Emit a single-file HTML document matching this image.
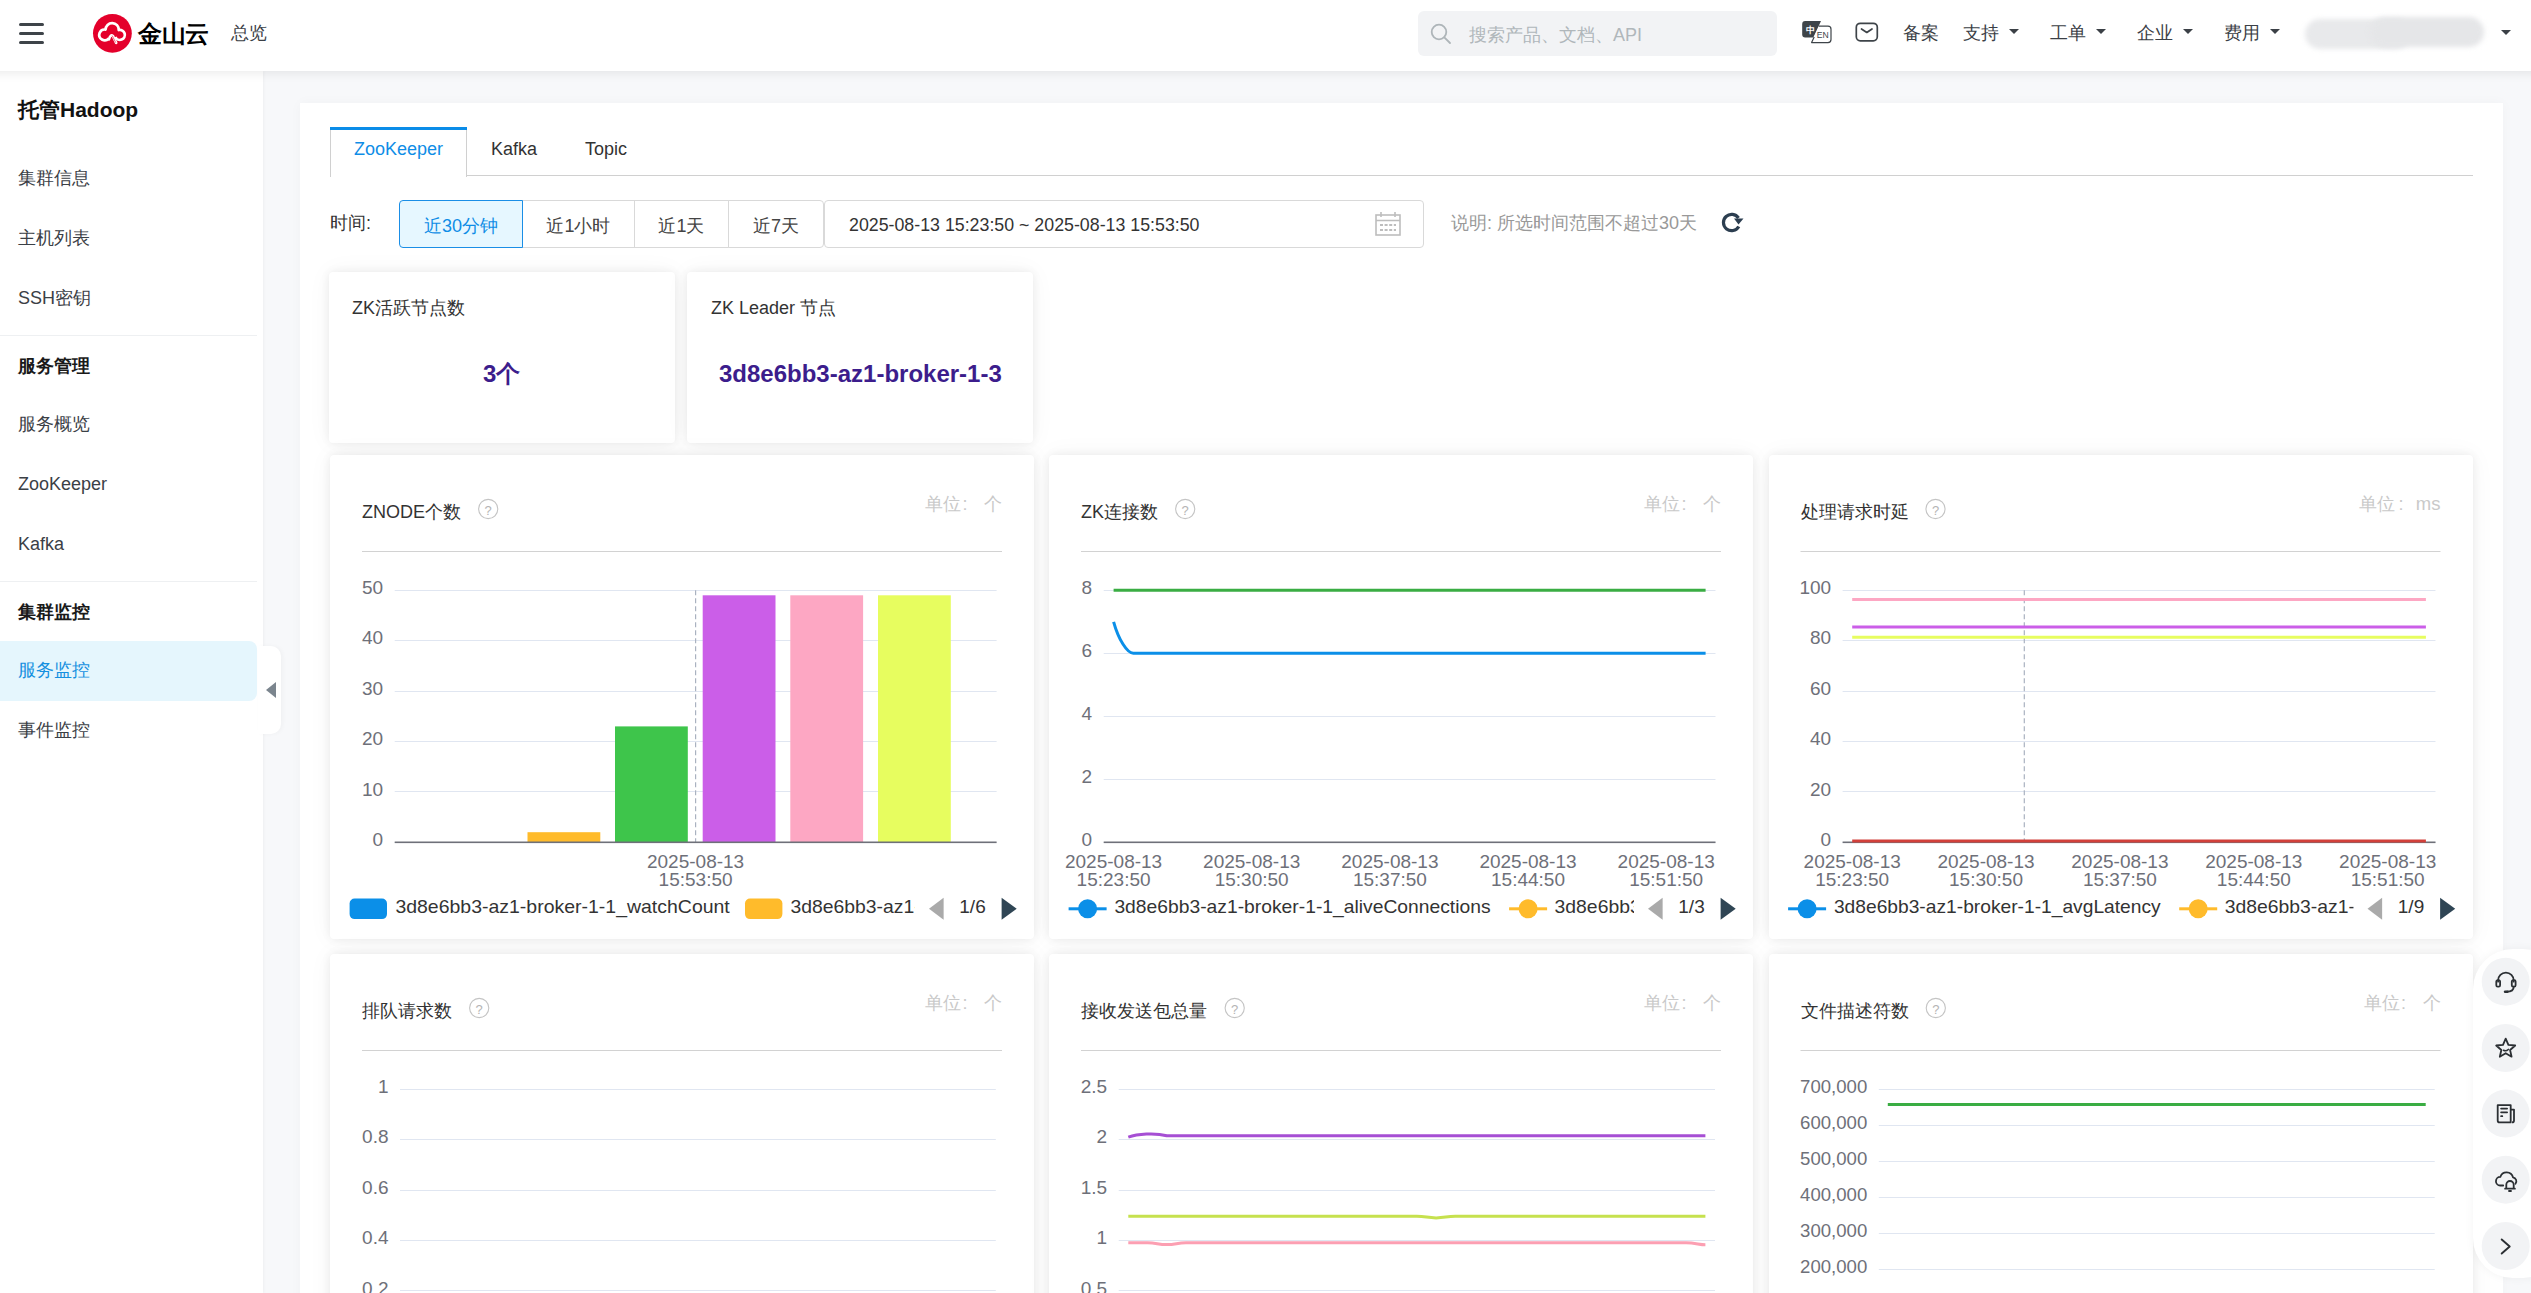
<!DOCTYPE html>
<html><head><meta charset="utf-8"><style>
*{box-sizing:border-box;margin:0;padding:0}
html,body{width:2531px;height:1293px;overflow:hidden;background:#f7f8fa;font-family:"Liberation Sans",sans-serif;color:#333}
.a{position:absolute;white-space:nowrap}
#hdr{position:absolute;left:0;top:0;width:2531px;height:71px;background:#fff;z-index:5}
#hsh{position:absolute;left:-40px;top:0;width:2611px;height:71px;background:#fff;box-shadow:0 2px 10px rgba(0,0,0,0.085);z-index:4}
#side{position:absolute;left:0;top:71px;width:263px;height:1222px;background:#fff;z-index:2;box-shadow:1px 0 3px rgba(0,0,0,0.04)}
#panel{position:absolute;left:300px;top:103px;width:2203px;height:1300px;background:#fff;z-index:1;box-shadow:0 0 12px rgba(0,0,0,0.03)}
.nav{font-size:18px;color:#3b4046;line-height:24px}
.navb{font-size:18px;font-weight:700;color:#1a1a1a;line-height:24px}
.hd{font-size:18px;color:#3b4046;line-height:24px}
.tri{position:absolute;width:0;height:0;border-left:5px solid transparent;border-right:5px solid transparent;border-top:5px solid #3b4046}
.card{position:absolute;background:#fff;border-radius:4px;box-shadow:0 0 10px rgba(0,0,0,0.07),0 0 26px rgba(0,0,0,0.045);z-index:3}
.t18{font-size:18px;line-height:24px;color:#333}
.btn{position:absolute;top:200px;height:48px;border:1px solid #d9d9d9;background:#fff;font-size:18px;line-height:46px;padding-top:2px;color:#444;text-align:center;z-index:3}
#ov{position:absolute;left:0;top:0;z-index:6}
</style></head><body>
<div id="hsh"></div>
<div id="hdr">
<div class="a" style="left:19px;top:23px;width:25px;height:3px;border-radius:2px;background:#3e4449"></div>
<div class="a" style="left:19px;top:32px;width:25px;height:3px;border-radius:2px;background:#3e4449"></div>
<div class="a" style="left:19px;top:41px;width:25px;height:3px;border-radius:2px;background:#3e4449"></div>
<svg class="a" style="left:90px;top:10px" width="46" height="46" viewBox="0 0 46 46">
<circle cx="22.4" cy="23.3" r="19.4" fill="#e4002b"/>
<path d="M18.7 28.34 A5.35 5.35 0 1 1 15.55 19.63 A6.6 6.6 0 1 1 28.74 20.03 A5 5 0 1 1 25.3 27.0" fill="none" stroke="#fff" stroke-width="2.7" stroke-linejoin="round"/>
<path d="M18.9 29.4 Q20.5 23.6 23.1 26.3 L26.2 32.8" fill="none" stroke="#fff" stroke-width="2.7" stroke-linecap="round" stroke-linejoin="round"/>
<path d="M22.2 25.6 L25.7 32.6" stroke="#e4002b" stroke-width="0.6"/>
</svg>
<div class="a" style="left:138px;top:18px;font-size:24px;font-weight:700;color:#000;line-height:32px;letter-spacing:-0.5px">金山云</div>
<div class="a hd" style="left:231px;top:21px">总览</div>
<div class="a" style="left:1418px;top:11px;width:359px;height:45px;border-radius:6px;background:#f2f3f5"></div>
<svg class="a" style="left:1430px;top:23px" width="22" height="22" viewBox="0 0 22 22"><circle cx="9" cy="9" r="7.3" stroke="#aeb5b9" stroke-width="1.8" fill="none"/><path d="M14.3 14.3 L20 20" stroke="#aeb5b9" stroke-width="1.8" stroke-linecap="round"/></svg>
<div class="a" style="left:1469px;top:23px;font-size:18px;color:#b0b7bb;line-height:24px">搜索产品、文档、API</div>
<svg class="a" style="left:1801px;top:20px" width="32" height="24" viewBox="0 0 32 24">
<path d="M4.2 1.1 H20 L12.3 17.4 H4.2 Q1.2 17.4 1.2 14.4 V4.1 Q1.2 1.1 4.2 1.1Z" fill="#3e4449"/>
<path d="M17.9 6.2 H27 Q30 6.2 30 9.2 V19.6 Q30 22.6 27 22.6 H10.6 Z" fill="#fff"/><path d="M17.6 6.2 H27 Q30 6.2 30 9.2 V19.6 Q30 22.6 27 22.6 H10.6 L13.2 17" fill="none" stroke="#3e4449" stroke-width="1.2" stroke-linejoin="round"/>
<text x="4.6" y="13.2" font-size="9" font-weight="700" fill="#fff" font-family='"Liberation Sans",sans-serif'>中</text>
<text x="15.8" y="17.8" font-size="9.4" fill="#3e4449" font-family='"Liberation Sans",sans-serif' textLength="12" lengthAdjust="spacingAndGlyphs">EN</text>
</svg>
<svg class="a" style="left:1855px;top:22px" width="24" height="20" viewBox="0 0 24 20"><rect x="1.3" y="1.3" width="21" height="17.5" rx="4" stroke="#3e4449" stroke-width="1.7" fill="none"/><path d="M6.5 7 L11.8 10.5 L17 7" stroke="#3e4449" stroke-width="1.7" fill="none" stroke-linecap="round" stroke-linejoin="round"/></svg>
<div class="a hd" style="left:1903px;top:21px">备案</div>
<div class="a hd" style="left:1963px;top:21px">支持</div><div class="tri" style="left:2009px;top:29px"></div>
<div class="a hd" style="left:2050px;top:21px">工单</div><div class="tri" style="left:2096px;top:29px"></div>
<div class="a hd" style="left:2137px;top:21px">企业</div><div class="tri" style="left:2183px;top:29px"></div>
<div class="a hd" style="left:2224px;top:21px">费用</div><div class="tri" style="left:2270px;top:29px"></div>
<div class="a" style="left:2305px;top:19px;width:106px;height:30px;border-radius:15px;background:#e8e9eb;filter:blur(2.5px)"></div>
<div class="a" style="left:2370px;top:17px;width:114px;height:30px;border-radius:15px;background:#e5e6e8;filter:blur(2.5px)"></div>
<div class="tri" style="left:2501px;top:30px"></div>
</div>
<div id="side">
<div class="a" style="left:18px;top:26px;font-size:21px;font-weight:700;color:#111;line-height:26px">托管Hadoop</div>
<div class="a nav" style="left:18px;top:95px">集群信息</div>
<div class="a nav" style="left:18px;top:155px">主机列表</div>
<div class="a nav" style="left:18px;top:215px">SSH密钥</div>
<div class="a nav" style="left:18px;top:341px">服务概览</div>
<div class="a nav" style="left:18px;top:401px">ZooKeeper</div>
<div class="a nav" style="left:18px;top:461px">Kafka</div>
<div class="a nav" style="left:18px;top:647px">事件监控</div>
<div class="a navb" style="left:18px;top:283px">服务管理</div>
<div class="a navb" style="left:18px;top:529px">集群监控</div>
<div class="a" style="left:0;top:264px;width:257px;height:1px;background:#eef0f2"></div>
<div class="a" style="left:0;top:510px;width:257px;height:1px;background:#eef0f2"></div>
<div class="a" style="left:0;top:570px;width:257px;height:60px;border-radius:0 8px 8px 0;background:#e5f6fd"></div>
<div class="a nav" style="left:18px;top:587px;color:#1590e0">服务监控</div>
</div>
<div class="a" style="left:258px;top:646px;width:23px;height:88px;border-radius:0 10px 10px 0;background:#fff;z-index:2;box-shadow:2px 0 4px rgba(0,0,0,0.03)"></div>
<div class="a" style="left:266px;top:682px;width:0;height:0;border-top:8px solid transparent;border-bottom:8px solid transparent;border-right:10px solid #7b858e;z-index:3"></div>
<div id="panel"></div>
<div class="a" style="left:330px;top:127px;width:137px;height:3px;background:#0a8ce8;z-index:3"></div>
<div class="a" style="left:330px;top:130px;width:1px;height:47px;background:#d0d0d0;z-index:3"></div>
<div class="a" style="left:466px;top:130px;width:1px;height:47px;background:#d0d0d0;z-index:3"></div>
<div class="a" style="left:467px;top:175px;width:2006px;height:1px;background:#d0d0d0;z-index:3"></div>
<div class="a t18" style="left:354px;top:137px;color:#0f8de6;z-index:3">ZooKeeper</div>
<div class="a t18" style="left:491px;top:137px;z-index:3">Kafka</div>
<div class="a t18" style="left:585px;top:137px;z-index:3">Topic</div>
<div class="a t18" style="left:330px;top:211px;z-index:3">时间:</div>
<div class="btn" style="left:399px;width:124px;border-color:#1a8ee6;background:#e6f7ff;color:#0f8de6;border-radius:4px 0 0 4px;z-index:4">近30分钟</div>
<div class="btn" style="left:522px;width:113px">近1小时</div>
<div class="btn" style="left:634px;width:95px">近1天</div>
<div class="btn" style="left:728px;width:96px;border-radius:0 4px 4px 0">近7天</div>
<div class="btn" style="left:824px;width:600px;border-radius:4px;text-align:left;padding-left:24px;padding-top:1px;color:#333;font-size:17.8px">2025-08-13 15:23:50 ~ 2025-08-13 15:53:50</div>
<svg class="a" style="left:1375px;top:211px;z-index:4" width="26" height="26" viewBox="0 0 26 26">
<rect x="1" y="4" width="24" height="20" fill="none" stroke="#bdbdbd" stroke-width="1.6"/>
<path d="M1 9.5 H25 M6 1 V6 M20 1 V6" stroke="#bdbdbd" stroke-width="1.6"/>
<path d="M5 14 H21 M5 19 H21" stroke="#bdbdbd" stroke-width="1.8" stroke-dasharray="3 1.6"/>
</svg>
<div class="a t18" style="left:1451px;top:211px;color:#999;z-index:3">说明: 所选时间范围不超过30天</div>
<svg class="a" style="left:1719px;top:210px;z-index:4" width="26" height="24" viewBox="0 0 26 24">
<path d="M19.5 8 A8.2 8.2 0 1 0 19.8 16.5" fill="none" stroke="#2c3e50" stroke-width="3.2"/>
<path d="M15 8.5 L24.5 8.5 L19.5 14.5Z" fill="#2c3e50"/>
</svg>
<div class="card" style="left:329px;top:272px;width:346px;height:171px"></div>
<div class="card" style="left:687px;top:272px;width:346px;height:171px"></div>
<div class="a t18" style="left:352px;top:296px;z-index:4">ZK活跃节点数</div>
<div class="a t18" style="left:711px;top:296px;z-index:4">ZK Leader 节点</div>
<div class="a" style="left:483px;top:359px;font-size:24px;font-weight:700;color:#3c1d8c;line-height:30px;z-index:4">3个</div>
<div class="a" style="left:719px;top:359px;font-size:24px;font-weight:700;color:#3c1d8c;line-height:30px;z-index:4">3d8e6bb3-az1-broker-1-3</div>
<div class="card" style="left:330px;top:455px;width:704px;height:484px"></div>
<div class="card" style="left:1049px;top:455px;width:704px;height:484px"></div>
<div class="card" style="left:1768.5px;top:455px;width:704px;height:484px"></div>
<div class="card" style="left:330px;top:954px;width:704px;height:500px"></div>
<div class="card" style="left:1049px;top:954px;width:704px;height:500px"></div>
<div class="card" style="left:1768.5px;top:954px;width:704px;height:500px"></div>
<div class="a" style="left:2473px;top:949px;width:90px;height:329px;border-radius:40px;background:#fff;z-index:7;box-shadow:0 0 10px rgba(0,0,0,0.05)"></div>
<svg id="ov" width="2531" height="1293" font-family='"Liberation Sans",sans-serif'><text x="362" y="518" font-size="18" fill="#333">ZNODE个数</text><circle cx="488.2" cy="509" r="9.6" fill="none" stroke="#c4c4c4" stroke-width="1.1"/><text x="488.2" y="514.5" font-size="13" fill="#b4b4b4" text-anchor="middle">?</text><text x="1002" y="510" font-size="18" fill="#c9c9c9" text-anchor="end">个</text><text x="925" y="510" font-size="18" fill="#c9c9c9">单位</text><text x="962.5" y="510" font-size="18" fill="#c9c9c9">:</text><rect x="362" y="551" width="640" height="1" fill="#d2d2d2"/><rect x="394.7" y="590" width="601.9" height="1" fill="#e0e6f1"/><text x="383.2" y="593.9" font-size="19" fill="#6e7079" text-anchor="end" >50</text><rect x="394.7" y="640" width="601.9" height="1" fill="#e0e6f1"/><text x="383.2" y="644.3" font-size="19" fill="#6e7079" text-anchor="end" >40</text><rect x="394.7" y="691" width="601.9" height="1" fill="#e0e6f1"/><text x="383.2" y="694.7" font-size="19" fill="#6e7079" text-anchor="end" >30</text><rect x="394.7" y="741" width="601.9" height="1" fill="#e0e6f1"/><text x="383.2" y="745.1" font-size="19" fill="#6e7079" text-anchor="end" >20</text><rect x="394.7" y="791" width="601.9" height="1" fill="#e0e6f1"/><text x="383.2" y="795.5" font-size="19" fill="#6e7079" text-anchor="end" >10</text><rect x="394.7" y="842" width="601.9" height="1" fill="#e0e6f1"/><text x="383.2" y="845.9" font-size="19" fill="#6e7079" text-anchor="end" >0</text><line x1="695.6" y1="590.3" x2="695.6" y2="842.3" stroke="#aab2c0" stroke-width="1.2" stroke-dasharray="5 3"/><rect x="527.5" y="832.2" width="72.8" height="10.1" fill="#ffbb2b"/><rect x="615" y="726.4" width="72.8" height="115.9" fill="#3ec54b"/><rect x="702.7" y="595.3" width="72.8" height="247.0" fill="#cb5ee8"/><rect x="790.3" y="595.3" width="72.8" height="247.0" fill="#fda7c3"/><rect x="878" y="595.3" width="72.8" height="247.0" fill="#e7fd5f"/><rect x="394.7" y="841.5" width="601.9" height="1.6" fill="#6e7079"/><text x="695.6" y="868.2" font-size="19" fill="#6e7079" text-anchor="middle" >2025-08-13</text><text x="695.6" y="886.0" font-size="19" fill="#6e7079" text-anchor="middle" >15:53:50</text><rect x="349.6" y="898.5999999999999" width="37.4" height="20.5" rx="5" fill="#0b8fe8"/><text x="395.40000000000003" y="912.7" font-size="19" fill="#333" textLength="334.4" lengthAdjust="spacingAndGlyphs">3d8e6bb3-az1-broker-1-1_watchCount</text><rect x="745.0" y="898.5999999999999" width="37.4" height="20.5" rx="5" fill="#ffbb2b"/><clipPath id="cl330_455"><rect x="785.0" y="887.5" width="130.0" height="40"/></clipPath><text x="790.5" y="912.7" font-size="19" fill="#333" clip-path="url(#cl330_455)" textLength="219.4" lengthAdjust="spacingAndGlyphs">3d8e6bb3-az1-broker-1-1</text><path d="M943.6 897.8 L929 908.8 L943.6 919.8Z" fill="#aaa"/><text x="972.5" y="912.7" font-size="19" fill="#333" text-anchor="middle">1/6</text><path d="M1001.6 897.8 L1016.7 908.8 L1001.6 919.8Z" fill="#2f4554"/><text x="1081" y="518" font-size="18" fill="#333">ZK连接数</text><circle cx="1185.2" cy="509" r="9.6" fill="none" stroke="#c4c4c4" stroke-width="1.1"/><text x="1185.2" y="514.5" font-size="13" fill="#b4b4b4" text-anchor="middle">?</text><text x="1721" y="510" font-size="18" fill="#c9c9c9" text-anchor="end">个</text><text x="1644" y="510" font-size="18" fill="#c9c9c9">单位</text><text x="1681.5" y="510" font-size="18" fill="#c9c9c9">:</text><rect x="1081" y="551" width="640" height="1" fill="#d2d2d2"/><rect x="1103.7" y="590" width="611.8" height="1" fill="#e0e6f1"/><text x="1092.2" y="593.9" font-size="19" fill="#6e7079" text-anchor="end" >8</text><rect x="1103.7" y="653" width="611.8" height="1" fill="#e0e6f1"/><text x="1092.2" y="656.9" font-size="19" fill="#6e7079" text-anchor="end" >6</text><rect x="1103.7" y="716" width="611.8" height="1" fill="#e0e6f1"/><text x="1092.2" y="719.9" font-size="19" fill="#6e7079" text-anchor="end" >4</text><rect x="1103.7" y="779" width="611.8" height="1" fill="#e0e6f1"/><text x="1092.2" y="782.9" font-size="19" fill="#6e7079" text-anchor="end" >2</text><rect x="1103.7" y="842" width="611.8" height="1" fill="#e0e6f1"/><text x="1092.2" y="845.9" font-size="19" fill="#6e7079" text-anchor="end" >0</text><rect x="1103.7" y="841.5" width="611.8" height="1.6" fill="#6e7079"/><text x="1113.6" y="868.2" font-size="19" fill="#6e7079" text-anchor="middle" >2025-08-13</text><text x="1113.6" y="886.0" font-size="19" fill="#6e7079" text-anchor="middle" >15:23:50</text><text x="1251.7" y="868.2" font-size="19" fill="#6e7079" text-anchor="middle" >2025-08-13</text><text x="1251.7" y="886.0" font-size="19" fill="#6e7079" text-anchor="middle" >15:30:50</text><text x="1389.9" y="868.2" font-size="19" fill="#6e7079" text-anchor="middle" >2025-08-13</text><text x="1389.9" y="886.0" font-size="19" fill="#6e7079" text-anchor="middle" >15:37:50</text><text x="1528.0" y="868.2" font-size="19" fill="#6e7079" text-anchor="middle" >2025-08-13</text><text x="1528.0" y="886.0" font-size="19" fill="#6e7079" text-anchor="middle" >15:44:50</text><text x="1666.2" y="868.2" font-size="19" fill="#6e7079" text-anchor="middle" >2025-08-13</text><text x="1666.2" y="886.0" font-size="19" fill="#6e7079" text-anchor="middle" >15:51:50</text><path d="M1113.6 590.3 L1705.6 590.3" stroke="#3aad43" stroke-width="3" fill="none"/><path d="M1113.6 621.8 C1118.6 639.8 1127.3 653.3 1133.3 653.3 L1705.6 653.3" stroke="#0b8fe8" stroke-width="3" fill="none"/><rect x="1068.6" y="907.3" width="38" height="3" fill="#0b8fe8"/><circle cx="1087.6" cy="908.8" r="9.5" fill="#0b8fe8"/><text x="1114.3999999999999" y="912.7" font-size="19" fill="#333" textLength="376.2" lengthAdjust="spacingAndGlyphs">3d8e6bb3-az1-broker-1-1_aliveConnections</text><rect x="1509.1" y="907.3" width="38" height="3" fill="#ffbb2b"/><circle cx="1528.1" cy="908.8" r="9.5" fill="#ffbb2b"/><clipPath id="cl1049_455"><rect x="1549.1" y="887.5" width="84.9" height="40"/></clipPath><text x="1554.6" y="912.7" font-size="19" fill="#333" clip-path="url(#cl1049_455)" textLength="219.4" lengthAdjust="spacingAndGlyphs">3d8e6bb3-az1-broker-1-1</text><path d="M1662.6 897.8 L1648 908.8 L1662.6 919.8Z" fill="#aaa"/><text x="1691.5" y="912.7" font-size="19" fill="#333" text-anchor="middle">1/3</text><path d="M1720.6 897.8 L1735.6999999999998 908.8 L1720.6 919.8Z" fill="#2f4554"/><text x="1800.5" y="518" font-size="18" fill="#333">处理请求时延</text><circle cx="1935.5" cy="509" r="9.6" fill="none" stroke="#c4c4c4" stroke-width="1.1"/><text x="1935.5" y="514.5" font-size="13" fill="#b4b4b4" text-anchor="middle">?</text><text x="2440.5" y="510" font-size="18.5" fill="#c9c9c9" text-anchor="end">ms</text><text x="2358.5" y="510" font-size="18" fill="#c9c9c9">单位</text><text x="2398.5" y="510" font-size="18" fill="#c9c9c9">:</text><rect x="1800.5" y="551" width="640" height="1" fill="#d2d2d2"/><rect x="1842.6" y="590" width="592.9" height="1" fill="#e0e6f1"/><text x="1831.1" y="593.9" font-size="19" fill="#6e7079" text-anchor="end" >100</text><rect x="1842.6" y="640" width="592.9" height="1" fill="#e0e6f1"/><text x="1831.1" y="644.3" font-size="19" fill="#6e7079" text-anchor="end" >80</text><rect x="1842.6" y="691" width="592.9" height="1" fill="#e0e6f1"/><text x="1831.1" y="694.7" font-size="19" fill="#6e7079" text-anchor="end" >60</text><rect x="1842.6" y="741" width="592.9" height="1" fill="#e0e6f1"/><text x="1831.1" y="745.1" font-size="19" fill="#6e7079" text-anchor="end" >40</text><rect x="1842.6" y="791" width="592.9" height="1" fill="#e0e6f1"/><text x="1831.1" y="795.5" font-size="19" fill="#6e7079" text-anchor="end" >20</text><rect x="1842.6" y="842" width="592.9" height="1" fill="#e0e6f1"/><text x="1831.1" y="845.9" font-size="19" fill="#6e7079" text-anchor="end" >0</text><line x1="2024.3" y1="590.3" x2="2024.3" y2="842.3" stroke="#aab2c0" stroke-width="1.2" stroke-dasharray="5 3"/><rect x="1842.6" y="841.5" width="592.9" height="1.6" fill="#6e7079"/><text x="1852.2" y="868.2" font-size="19" fill="#6e7079" text-anchor="middle" >2025-08-13</text><text x="1852.2" y="886.0" font-size="19" fill="#6e7079" text-anchor="middle" >15:23:50</text><text x="1986.0" y="868.2" font-size="19" fill="#6e7079" text-anchor="middle" >2025-08-13</text><text x="1986.0" y="886.0" font-size="19" fill="#6e7079" text-anchor="middle" >15:30:50</text><text x="2119.9" y="868.2" font-size="19" fill="#6e7079" text-anchor="middle" >2025-08-13</text><text x="2119.9" y="886.0" font-size="19" fill="#6e7079" text-anchor="middle" >15:37:50</text><text x="2253.8" y="868.2" font-size="19" fill="#6e7079" text-anchor="middle" >2025-08-13</text><text x="2253.8" y="886.0" font-size="19" fill="#6e7079" text-anchor="middle" >15:44:50</text><text x="2387.7" y="868.2" font-size="19" fill="#6e7079" text-anchor="middle" >2025-08-13</text><text x="2387.7" y="886.0" font-size="19" fill="#6e7079" text-anchor="middle" >15:51:50</text><path d="M1852.2 599.4 L2425.9 599.4" stroke="#fda7c3" stroke-width="3" fill="none"/><path d="M1852.2 627 L2425.9 627" stroke="#cb5ee8" stroke-width="3" fill="none"/><path d="M1852.2 637.3 L2425.9 637.3" stroke="#e7fd5f" stroke-width="3" fill="none"/><path d="M1852.2 841 L2425.9 841" stroke="#d2403a" stroke-width="3" fill="none"/><rect x="1788.1" y="907.3" width="38" height="3" fill="#0b8fe8"/><circle cx="1807.1" cy="908.8" r="9.5" fill="#0b8fe8"/><text x="1833.8999999999999" y="912.7" font-size="19" fill="#333" textLength="326.8" lengthAdjust="spacingAndGlyphs">3d8e6bb3-az1-broker-1-1_avgLatency</text><rect x="2179.2" y="907.3" width="38" height="3" fill="#ffbb2b"/><circle cx="2198.2" cy="908.8" r="9.5" fill="#ffbb2b"/><clipPath id="cl1768_455"><rect x="2219.2" y="887.5" width="134.3" height="40"/></clipPath><text x="2224.7" y="912.7" font-size="19" fill="#333" clip-path="url(#cl1768_455)" textLength="219.4" lengthAdjust="spacingAndGlyphs">3d8e6bb3-az1-broker-1-1</text><path d="M2382.1 897.8 L2367.5 908.8 L2382.1 919.8Z" fill="#aaa"/><text x="2411.0" y="912.7" font-size="19" fill="#333" text-anchor="middle">1/9</text><path d="M2440.1 897.8 L2455.2 908.8 L2440.1 919.8Z" fill="#2f4554"/><text x="362" y="1017" font-size="18" fill="#333">排队请求数</text><circle cx="479.2" cy="1008" r="9.6" fill="none" stroke="#c4c4c4" stroke-width="1.1"/><text x="479.2" y="1013.5" font-size="13" fill="#b4b4b4" text-anchor="middle">?</text><text x="1002" y="1009" font-size="18" fill="#c9c9c9" text-anchor="end">个</text><text x="925" y="1009" font-size="18" fill="#c9c9c9">单位</text><text x="962.5" y="1009" font-size="18" fill="#c9c9c9">:</text><rect x="362" y="1050" width="640" height="1" fill="#d2d2d2"/><rect x="400" y="1089" width="595.8" height="1" fill="#e0e6f1"/><text x="388.5" y="1092.9" font-size="19" fill="#6e7079" text-anchor="end" >1</text><rect x="400" y="1139" width="595.8" height="1" fill="#e0e6f1"/><text x="388.5" y="1143.3" font-size="19" fill="#6e7079" text-anchor="end" >0.8</text><rect x="400" y="1190" width="595.8" height="1" fill="#e0e6f1"/><text x="388.5" y="1193.7" font-size="19" fill="#6e7079" text-anchor="end" >0.6</text><rect x="400" y="1240" width="595.8" height="1" fill="#e0e6f1"/><text x="388.5" y="1244.1" font-size="19" fill="#6e7079" text-anchor="end" >0.4</text><rect x="400" y="1290" width="595.8" height="1" fill="#e0e6f1"/><text x="388.5" y="1294.5" font-size="19" fill="#6e7079" text-anchor="end" >0.2</text><rect x="400" y="1341" width="595.8" height="1" fill="#e0e6f1"/><text x="388.5" y="1344.9" font-size="19" fill="#6e7079" text-anchor="end" >0</text><text x="1081" y="1017" font-size="18" fill="#333">接收发送包总量</text><circle cx="1234.7" cy="1008" r="9.6" fill="none" stroke="#c4c4c4" stroke-width="1.1"/><text x="1234.7" y="1013.5" font-size="13" fill="#b4b4b4" text-anchor="middle">?</text><text x="1721" y="1009" font-size="18" fill="#c9c9c9" text-anchor="end">个</text><text x="1644" y="1009" font-size="18" fill="#c9c9c9">单位</text><text x="1681.5" y="1009" font-size="18" fill="#c9c9c9">:</text><rect x="1081" y="1050" width="640" height="1" fill="#d2d2d2"/><rect x="1118.7" y="1089" width="596.3" height="1" fill="#e0e6f1"/><text x="1107.2" y="1092.9" font-size="19" fill="#6e7079" text-anchor="end" >2.5</text><rect x="1118.7" y="1139" width="596.3" height="1" fill="#e0e6f1"/><text x="1107.2" y="1143.3" font-size="19" fill="#6e7079" text-anchor="end" >2</text><rect x="1118.7" y="1190" width="596.3" height="1" fill="#e0e6f1"/><text x="1107.2" y="1193.7" font-size="19" fill="#6e7079" text-anchor="end" >1.5</text><rect x="1118.7" y="1240" width="596.3" height="1" fill="#e0e6f1"/><text x="1107.2" y="1244.1" font-size="19" fill="#6e7079" text-anchor="end" >1</text><rect x="1118.7" y="1290" width="596.3" height="1" fill="#e0e6f1"/><text x="1107.2" y="1294.5" font-size="19" fill="#6e7079" text-anchor="end" >0.5</text><rect x="1118.7" y="1341" width="596.3" height="1" fill="#e0e6f1"/><text x="1107.2" y="1344.9" font-size="19" fill="#6e7079" text-anchor="end" >0</text><path d="M1128.3 1137.2 C1137.3 1134 1154.8 1132.5 1166.8 1135.8 L1705.4 1135.8" stroke="#a64fd4" stroke-width="3" fill="none"/><path d="M1128.3 1216.3 L1416.8 1216.3 C1425.8 1216.3 1427.1 1217.8999999999999 1436.1 1217.8999999999999 C1445.1 1217.8999999999999 1446.3 1216.3 1455.3 1216.3 L1705.4 1216.3" stroke="#c6e14e" stroke-width="3" fill="none"/><path d="M1128.3 1242.8 L1147.6 1242.8 C1156.6 1242.8 1157.8 1244.6 1166.8 1244.6 C1175.8 1244.6 1177.0 1242.8 1186.0 1242.8 L1686.1 1242.8 C1695.1 1242.8 1699.4 1244.8 1705.4 1244.8" stroke="#fc9fb2" stroke-width="3" fill="none"/><text x="1800.5" y="1017" font-size="18" fill="#333">文件描述符数</text><circle cx="1935.8" cy="1008" r="9.6" fill="none" stroke="#c4c4c4" stroke-width="1.1"/><text x="1935.8" y="1013.5" font-size="13" fill="#b4b4b4" text-anchor="middle">?</text><text x="2440.5" y="1009" font-size="18" fill="#c9c9c9" text-anchor="end">个</text><text x="2363.5" y="1009" font-size="18" fill="#c9c9c9">单位</text><text x="2401.0" y="1009" font-size="18" fill="#c9c9c9">:</text><rect x="1800.5" y="1050" width="640" height="1" fill="#d2d2d2"/><rect x="1878.8" y="1089" width="555.9" height="1" fill="#e0e6f1"/><text x="1867.3" y="1092.9" font-size="18.6" fill="#6e7079" text-anchor="end" >700,000</text><rect x="1878.8" y="1125" width="555.9" height="1" fill="#e0e6f1"/><text x="1867.3" y="1128.8" font-size="18.6" fill="#6e7079" text-anchor="end" >600,000</text><rect x="1878.8" y="1161" width="555.9" height="1" fill="#e0e6f1"/><text x="1867.3" y="1164.8" font-size="18.6" fill="#6e7079" text-anchor="end" >500,000</text><rect x="1878.8" y="1197" width="555.9" height="1" fill="#e0e6f1"/><text x="1867.3" y="1200.7" font-size="18.6" fill="#6e7079" text-anchor="end" >400,000</text><rect x="1878.8" y="1233" width="555.9" height="1" fill="#e0e6f1"/><text x="1867.3" y="1236.7" font-size="18.6" fill="#6e7079" text-anchor="end" >300,000</text><rect x="1878.8" y="1269" width="555.9" height="1" fill="#e0e6f1"/><text x="1867.3" y="1272.6" font-size="18.6" fill="#6e7079" text-anchor="end" >200,000</text><rect x="1878.8" y="1304" width="555.9" height="1" fill="#e0e6f1"/><text x="1867.3" y="1308.5" font-size="18.6" fill="#6e7079" text-anchor="end" >100,000</text><rect x="1878.8" y="1340" width="555.9" height="1" fill="#e0e6f1"/><text x="1867.3" y="1344.5" font-size="18.6" fill="#6e7079" text-anchor="end" >0</text><path d="M1887.8 1104.5 L2425.7 1104.5" stroke="#3aad43" stroke-width="3.2" fill="none"/></svg>
<svg class="a" style="left:0;top:0;z-index:8" width="2531" height="1293"><circle cx="2505.7" cy="981.7" r="24" fill="#f2f3f5"/><circle cx="2505.7" cy="1048" r="24" fill="#f2f3f5"/><circle cx="2505.7" cy="1113.6" r="24" fill="#f2f3f5"/><circle cx="2505.7" cy="1179.7" r="24" fill="#f2f3f5"/><circle cx="2505.7" cy="1246" r="24" fill="#f2f3f5"/><g transform="translate(2505.9 981.7)" fill="none" stroke="#2b2f33" stroke-width="1.8" stroke-linecap="round"><path d="M-7.8 0 V-1.3 A7.8 7.8 0 0 1 7.8 -1.3 V0"/><rect x="-9.6" y="-1.5" width="3.8" height="6.4" rx="1.4"/><rect x="5.9" y="-1.5" width="3.8" height="6.4" rx="1.4"/><path d="M7.8 5 Q7.8 10 1 10"/><path d="M-0.8 10 H1.5" stroke-width="2.6"/></g><g transform="translate(2505.7 1048)" fill="none" stroke="#2b2f33" stroke-width="1.8" stroke-linejoin="round"><polygon points="0.00,-9.40 2.70,-3.12 9.51,-2.49 4.37,2.02 5.88,8.69 0.00,5.20 -5.88,8.69 -4.37,2.02 -9.51,-2.49 -2.70,-3.12"/><path d="M-2.3 2.3 Q0.5 3.6 2.6 1.4" stroke-width="1.5" stroke-linecap="round"/></g><g transform="translate(2505.7 1113.6)" fill="none" stroke="#2b2f33" stroke-width="1.8" stroke-linejoin="round"><path d="M-8 -8.5 H5 V8.8 H-6 Q-8 8.8 -8 6.8Z"/><path d="M5 -4 H8.3 V6.8 Q8.3 8.8 6.3 8.8"/><path d="M-4.6 -5 H1.4 M-4.6 -1.3 H1.4 M-4.6 2.6 H-3.4" stroke-linecap="round"/></g><g transform="translate(2505.7 1179.7)" fill="none" stroke="#2b2f33" stroke-width="1.8" stroke-linecap="round" stroke-linejoin="round"><path d="M-2.5 5.8 H-5.5 A4.3 4.3 0 0 1 -5.4 -2.8 A6.6 6.6 0 0 1 7.3 -2.4 A4 4 0 0 1 9.8 4"/><path d="M0.6 9 V5 A3.7 3.7 0 0 1 8 5 V9 H-0.6 H9.2"/><path d="M3.3 11.3 H5.3"/></g><g transform="translate(2505.7 1246.5)" fill="none" stroke="#2b2f33" stroke-width="1.9" stroke-linecap="round" stroke-linejoin="round"><path d="M-4 -7 L4 0 L-4 7"/></g></svg>
</body></html>
